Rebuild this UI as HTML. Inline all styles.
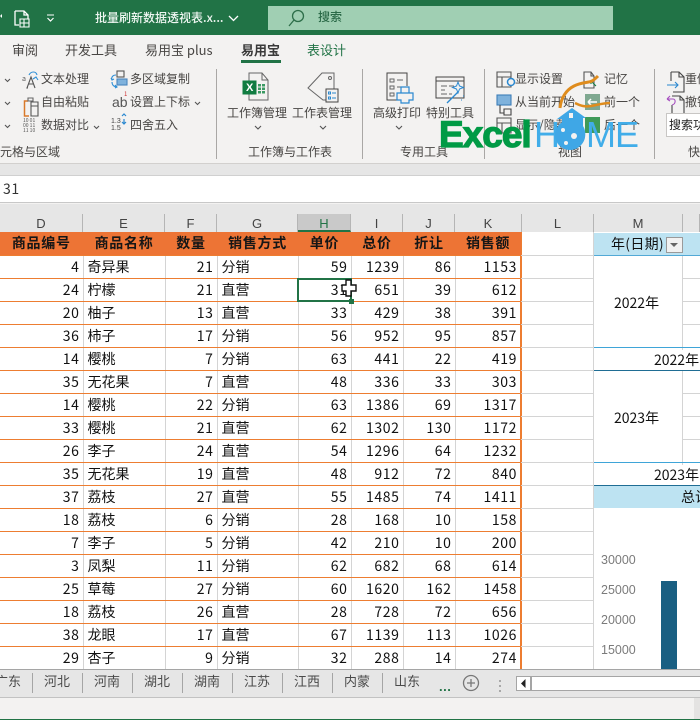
<!DOCTYPE html>
<html lang="zh"><head><meta charset="utf-8"><title>批量刷新数据透视表</title>
<style>
*{box-sizing:border-box;margin:0;padding:0}
html,body{width:700px;height:720px;overflow:hidden;background:#f3f2f1}
body{position:relative;font-family:"Liberation Sans","Noto Sans CJK SC",sans-serif;color:#444}
.a{position:absolute}
.t{position:absolute;white-space:nowrap;font-size:12px;line-height:16px;color:#484644;font-family:"Noto Sans CJK SC",sans-serif}
.sep{position:absolute;top:69px;height:90px;width:1px;background:#a9a7a5}
svg{position:absolute;overflow:visible}
.col{position:absolute;top:214px;height:18px;background:#e6e6e6;border-right:1px solid #b5b5b5;text-align:center;font-size:13px;line-height:20px;color:#444;font-family:"Liberation Sans",sans-serif}
table{position:absolute;left:0;top:232px;width:521px;border-collapse:collapse;table-layout:fixed;font-family:"Noto Sans CJK SC",sans-serif;font-size:14px;color:#111;background:#fff}
td{height:23px;padding:0 3px;border-right:1px solid #d4d4d4;border-bottom:1px solid #ed7d31;text-align:right;line-height:20px;white-space:nowrap;letter-spacing:.6px;overflow:hidden}
td.l{text-align:left;padding-left:4px;letter-spacing:0}
tr.h td{background:#ed7435;font-weight:700;text-align:center;color:#161616;border-right:1px solid #ed7435;letter-spacing:.7px;font-size:14px}
td.e{border-right:2px solid #ed7d31}
.gl{position:absolute;left:521px;width:72px;height:1px;background:#d4d4d4}
.gr{position:absolute;left:683px;width:17px;height:1px;background:#d4d4d4}
.p{position:absolute;font-family:"Noto Sans CJK SC",sans-serif;font-size:14px;color:#111;white-space:nowrap;line-height:20px}
.y{position:absolute;left:601px;font-size:12.5px;color:#7b7b7b;font-family:"Liberation Sans",sans-serif;line-height:14px}
.tab{position:absolute;top:673px;font-size:13px;line-height:16px;color:#4a4a4a;font-family:"Noto Sans CJK SC",sans-serif}
.ts{position:absolute;top:673px;width:1px;height:20px;background:#a5a5a5}
</style></head><body>

<!-- title bar -->
<div class="a" style="left:0;top:0;width:700px;height:35px;background:#217346"></div>
<div class="a" style="left:268px;top:6px;width:345px;height:24px;background:#a0cfb3"></div>
<svg style="left:0;top:0" width="240" height="35" fill="none" stroke="#fff" stroke-width="1.3">
<path d="M0 16l2 2 0-4z" fill="#fff" stroke="none"/>
<path d="M15 11h9l4 4v4M24 11v4h4M15 11v14h4"/>
<path d="M20 19h9v8h-9zM24 19v8M20 23h9" stroke-width="1.1"/>
<path d="M47 15h7" stroke-width="1"/><path d="M47.5 18l3 3 3-3" stroke-width="1.2"/>
<path d="M229 16l4.500 4.500 4.500-4.500" stroke-width="1.300"/>
</svg>
<div class="t" style="left:95px;top:10px;color:#eef6f1;font-size:12px;font-weight:500">批量刷新数据透视表.x...</div>
<svg style="left:285px;top:8px" width="24" height="20" fill="none" stroke="#2d6e49" stroke-width="1.300"><circle cx="13" cy="8" r="5.500"/><path d="M9 12l-5 6"/></svg>
<div class="t" style="left:318px;top:9px;color:#2b6a48;font-size:12px;font-weight:500">搜索</div>

<!-- tabs -->
<div class="t" style="left:12px;top:42px;font-size:13px">审阅</div>
<div class="t" style="left:65px;top:42px;font-size:13px">开发工具</div>
<div class="t" style="left:145px;top:42px;font-size:13px">易用宝 plus</div>
<div class="t" style="left:241px;top:42px;font-size:13px;font-weight:700;color:#3a3a3a">易用宝</div>
<div class="a" style="left:241px;top:60px;width:40px;height:3px;background:#217346"></div>
<div class="t" style="left:307px;top:42px;font-size:13px;color:#217346">表设计</div>

<!-- ribbon left block -->
<svg style="left:0;top:70px" width="220" height="70" fill="none" stroke="#555" stroke-width="1.100">
<path d="M5 9l2.500 2.500L10 9M5 32l2.500 2.500L10 32M5 55l2.500 2.500L10 55M94 56l2.500 2.500L99 56M195 32l2.500 2.500L200 32"/>
<path d="M28 18l-1 0 4-11 4 11M28.500 14h5"/>
<path d="M29 5c2-4 7-4 8 0" stroke="#2e8fd6"/><path d="M33 9l3-2 2 3" stroke="#2e8fd6"/>
<path d="M28 31h-3.500v15H29" stroke="#d9792a" stroke-width="1.500"/><path d="M28 28h5v3h-5z" stroke="#666"/><path d="M31 32h7v14h-7zM31 36h7"/>
<rect x="117" y="1" width="7" height="6"/><rect x="117" y="9" width="10" height="6" fill="#7fb2dc" stroke="#4a86bd"/>
<path d="M116 5c-3 0-5 2-4 5M111 8l1 2 2-1M112 12c0 3 2 5 5 5M115 15l2 2-2 1" stroke="#2e8fd6"/>
<path d="M124 49v5M122 46l2-2 2 2M122 52l2 2 2-2" stroke="#2a88d0" stroke-width="1.200"/>
</svg>
<div class="t" style="left:22px;top:71px;font-size:7px;color:#555">a</div>
<div class="t" style="left:23px;top:118px;font-size:5px;line-height:5px;color:#555;white-space:nowrap">10 01<br>00 11<br>11 10</div>
<div class="t" style="left:112px;top:94px;font-size:14px;color:#555;font-family:'Liberation Sans'">ab</div>
<div class="t" style="left:124px;top:90px;font-size:6px;line-height:8px;color:#c33">1</div>
<div class="t" style="left:111px;top:118px;font-size:7px;line-height:7px;color:#444;font-family:'Liberation Sans';white-space:normal;width:12px">1.3<br>1.5</div>

<div class="t" style="left:41px;top:71px">文本处理</div>
<div class="t" style="left:41px;top:94px">自由粘贴</div>
<div class="t" style="left:41px;top:117px">数据对比</div>
<div class="t" style="left:130px;top:71px">多区域复制</div>
<div class="t" style="left:130px;top:94px">设置上下标</div>
<div class="t" style="left:130px;top:117px">四舍五入</div>
<div class="t" style="left:0;top:144px">元格与区域</div>
<div class="sep" style="left:216px"></div>

<!-- workbook -->
<svg style="left:240px;top:72px" width="110" height="60" fill="none" stroke="#666" stroke-width="1">
<path d="M9 9V1h13l6 7v20H9v-7M22 1v7h6"/>
<path d="M3 9h13v13H3z" fill="#107c41" stroke="#107c41"/>
<path d="M18 12h3v2.500h-3zM22 12h3v2.500h-3zM18 15.500h3V18h-3zM22 15.500h3V18h-3zM18 19h3v2.500h-3zM22 19h3v2.500h-3z" fill="#3b9a63" stroke="none"/>
<path d="M86 17h-0M94 17V1H82L68 16l15 12h3"/>
<circle cx="90" cy="6" r="1.500"/>
<rect x="86" y="17" width="12" height="13" stroke="#444" fill="#f3f2f1"/>
<path d="M88.500 20h2v2h-2zM88.500 25h2v2h-2z" stroke="#2a88d0"/><path d="M92 21h4M92 26h4" stroke="#2a88d0"/>
</svg>
<div class="t" style="left:246px;top:80px;font-size:11px;font-weight:700;color:#fff;font-family:'Liberation Sans'">X</div>
<div class="t" style="left:227px;top:105px">工作簿管理</div>
<div class="t" style="left:292px;top:105px">工作表管理</div>
<svg style="left:254px;top:125px" width="75" height="8" fill="none" stroke="#555" stroke-width="1.100"><path d="M1 1l3 3 3-3M66 1l3 3 3-3"/></svg>
<div class="t" style="left:248px;top:144px">工作簿与工作表</div>
<div class="sep" style="left:362px"></div>

<!-- print -->
<svg style="left:385px;top:72px" width="90" height="40" fill="none" stroke="#444" stroke-width="1">
<path d="M22 14V1H2v27h10"/>
<path d="M5 7h4v3H5zM5 14h4v3H5zM5 21h4v3H5zM12 8h6M12 15h4" stroke="#666"/>
<path d="M16 15h8v6h-8z M12 21h16v7h-4v3h-8v-3h-4z" stroke="#2a88d0" stroke-width="1.200" fill="#f3f2f1"/>
<path d="M51 5h28v21H51zM51 9h28" stroke="#444"/>
<path d="M56 14h6M56 18h4M56 22h6M64 14h5M64 22h3" stroke="#666"/>
<path d="M62 31l11-11" stroke="#2a88d0" stroke-width="1.300"/>
<path d="M73 10l1.500 4 4 1.500-4 1.500-1.500 4-1.500-4-4-1.500 4-1.500z" stroke="#2a88d0" fill="#f3f2f1"/>
<path d="M78 24h1M76 28h1" stroke="#2a88d0"/>
</svg>
<div class="t" style="left:373px;top:105px">高级打印</div>
<div class="t" style="left:426px;top:105px">特别工具</div>
<svg style="left:395px;top:125px" width="10" height="8" fill="none" stroke="#555" stroke-width="1.100"><path d="M1 1l3 3 3-3"/></svg>
<div class="t" style="left:400px;top:144px">专用工具</div>
<div class="sep" style="left:484px"></div>

<!-- view -->
<svg style="left:495px;top:70px" width="140" height="70" fill="none" stroke="#555" stroke-width="1.100">
<path d="M2 2h14v15H2zM2 7h14M7 7v10"/>
<circle cx="16" cy="12" r="3.500" stroke="#2a88d0" stroke-width="1.500" fill="#f3f2f1"/>
<rect x="2" y="25" width="14" height="10" fill="#7fb2dc" stroke="#3e7fb8"/>
<path d="M5 35v8h4" stroke="#444"/><path d="M9 39h7v6H9z" stroke="#444"/>
<path d="M2 48h14v15H2zM2 53h14M7 53v10"/>
<path d="M89 2h7l3 4v12H89zM96 2v4h3"/><path d="M96 11l5 5M96 11h3M96 11v3" stroke="#107c41"/>
<rect x="90" y="24" width="15" height="16" fill="#7fa890" stroke="none"/>
<path d="M93 32h9M93 32l3-3M93 32l3 3" stroke="#fff" stroke-width="1.500"/>
<rect x="90" y="47" width="15" height="16" fill="#3f9a58" stroke="none"/>
</svg>
<div class="t" style="left:515px;top:71px">显示设置</div>
<div class="t" style="left:515px;top:94px">从当前开始</div>
<div class="t" style="left:515px;top:117px">显示/隐藏</div>
<div class="t" style="left:604px;top:71px">记忆</div>
<div class="t" style="left:604px;top:94px">前一个</div>
<div class="t" style="left:604px;top:117px">后一个</div>
<div class="t" style="left:558px;top:144px">视图</div>
<div class="sep" style="left:654px"></div>

<!-- right -->
<svg style="left:665px;top:70px" width="35" height="45" fill="none" stroke="#444" stroke-width="1.100">
<path d="M6 2h8l5 5v15H8M14 2v5h5M6 2v9"/><path d="M2 15h11M10 12l3 3-3 3" stroke="#2a88d0"/>
<path d="M7 26h8l4 4v14H7v-9M15 26v4h4"/><path d="M2 29l3-3M2 29l3 2M2 29h6c3 0 3 5-1 6" stroke="#a64fc0"/>
</svg>
<div class="t" style="left:685px;top:71px">重做</div>
<div class="t" style="left:685px;top:94px">撤销</div>
<div class="a" style="left:666px;top:113px;width:34px;height:24px;background:#fff;border:1px solid #c8c6c4;border-right:0"></div>
<div class="t" style="left:669px;top:117px;color:#222;font-size:12px;overflow:hidden;width:31px">搜索功能</div>
<div class="t" style="left:688px;top:144px">快</div>

<!-- logo overlay -->
<div class="a" style="left:439px;top:113px;font-family:'Liberation Sans';font-weight:700;font-size:37px;line-height:44px;color:#009a45;letter-spacing:-1px;-webkit-text-stroke:1.200px #009a45;white-space:nowrap">Excel</div>
<div class="a" style="left:534px;top:113px;font-family:'Liberation Sans';font-size:36px;line-height:44px;color:#41ade9;letter-spacing:-1px;white-space:nowrap">HOME</div>
<svg style="left:530px;top:70px" width="110" height="90" fill="none">
<path d="M42 38l14 10h-3v8l-2 3" fill="#3fa7e6"/>
<path d="M42 38L27 49h5v5h20V48z" fill="#3fa7e6"/>
<circle cx="40" cy="65" r="15" fill="#3fa7e6"/>
<path d="M39 43h4v5h-4z" fill="#f3f2f1"/>
<circle cx="33" cy="60" r="2" fill="#f3f2f1"/><circle cx="44" cy="66" r="3" fill="#f3f2f1"/><circle cx="36" cy="73" r="2" fill="#f3f2f1"/>
<path d="M30 38c1-10 6-18 14-22 8-4 14-3 18-5 2-1 4-3 6-5" stroke="#df8c1d" stroke-width="3"/>
<path d="M45 33c6 3 10 4 16 3 6-1 12-3 19-3" stroke="#df8c1d" stroke-width="2.500"/>
</svg>

<div class="a" style="left:0;top:163px;width:700px;height:1px;background:#d2d0ce"></div>
<div class="a" style="left:0;top:164px;width:700px;height:11px;background:#e6e6e6"></div>
<div class="a" style="left:0;top:175px;width:700px;height:28px;background:#fff;border-top:1px solid #d0d0d0;border-bottom:1px solid #c8c8c8"></div>
<div class="a" style="left:3px;top:179px;font-size:14px;line-height:20px;color:#333;font-family:'Noto Sans CJK SC';letter-spacing:.6px">31</div>
<div class="a" style="left:0;top:204px;width:700px;height:10px;background:#e6e6e6"></div>

<!-- col headers -->
<div class="col" style="left:0;width:83px">D</div>
<div class="col" style="left:83px;width:82px">E</div>
<div class="col" style="left:165px;width:52px">F</div>
<div class="col" style="left:217px;width:81px">G</div>
<div class="col" style="left:298px;width:53px;background:#c9c9c9;border-bottom:2px solid #217346;color:#217346;line-height:19px">H</div>
<div class="col" style="left:351px;width:52px">I</div>
<div class="col" style="left:403px;width:52px">J</div>
<div class="col" style="left:455px;width:67px">K</div>
<div class="col" style="left:522px;width:72px">L</div>
<div class="col" style="left:594px;width:89px">M</div>
<div class="col" style="left:683px;width:17px"></div>
<div class="a" style="left:0;top:232px;width:700px;height:438px;background:#fff"></div>

<table>
<colgroup><col style="width:83px"><col style="width:82px"><col style="width:52px"><col style="width:81px"><col style="width:53px"><col style="width:52px"><col style="width:52px"><col style="width:66px"></colgroup>
<tr class="h"><td>商品编号</td><td>商品名称</td><td>数量</td><td>销售方式</td><td>单价</td><td>总价</td><td>折让</td><td class="e" style="border-right-color:#ed7d31">销售额</td></tr>
<tr><td>4</td><td class="l">奇异果</td><td>21</td><td class="l">分销</td><td>59</td><td>1239</td><td>86</td><td class="e">1153</td></tr>
<tr><td>24</td><td class="l">柠檬</td><td>21</td><td class="l">直营</td><td>31</td><td>651</td><td>39</td><td class="e">612</td></tr>
<tr><td>20</td><td class="l">柚子</td><td>13</td><td class="l">直营</td><td>33</td><td>429</td><td>38</td><td class="e">391</td></tr>
<tr><td>36</td><td class="l">柿子</td><td>17</td><td class="l">分销</td><td>56</td><td>952</td><td>95</td><td class="e">857</td></tr>
<tr><td>14</td><td class="l">樱桃</td><td>7</td><td class="l">分销</td><td>63</td><td>441</td><td>22</td><td class="e">419</td></tr>
<tr><td>35</td><td class="l">无花果</td><td>7</td><td class="l">直营</td><td>48</td><td>336</td><td>33</td><td class="e">303</td></tr>
<tr><td>14</td><td class="l">樱桃</td><td>22</td><td class="l">分销</td><td>63</td><td>1386</td><td>69</td><td class="e">1317</td></tr>
<tr><td>33</td><td class="l">樱桃</td><td>21</td><td class="l">直营</td><td>62</td><td>1302</td><td>130</td><td class="e">1172</td></tr>
<tr><td>26</td><td class="l">李子</td><td>24</td><td class="l">直营</td><td>54</td><td>1296</td><td>64</td><td class="e">1232</td></tr>
<tr><td>35</td><td class="l">无花果</td><td>19</td><td class="l">直营</td><td>48</td><td>912</td><td>72</td><td class="e">840</td></tr>
<tr><td>37</td><td class="l">荔枝</td><td>27</td><td class="l">直营</td><td>55</td><td>1485</td><td>74</td><td class="e">1411</td></tr>
<tr><td>18</td><td class="l">荔枝</td><td>6</td><td class="l">分销</td><td>28</td><td>168</td><td>10</td><td class="e">158</td></tr>
<tr><td>7</td><td class="l">李子</td><td>5</td><td class="l">分销</td><td>42</td><td>210</td><td>10</td><td class="e">200</td></tr>
<tr><td>3</td><td class="l">凤梨</td><td>11</td><td class="l">分销</td><td>62</td><td>682</td><td>68</td><td class="e">614</td></tr>
<tr><td>25</td><td class="l">草莓</td><td>27</td><td class="l">分销</td><td>60</td><td>1620</td><td>162</td><td class="e">1458</td></tr>
<tr><td>18</td><td class="l">荔枝</td><td>26</td><td class="l">直营</td><td>28</td><td>728</td><td>72</td><td class="e">656</td></tr>
<tr><td>38</td><td class="l">龙眼</td><td>17</td><td class="l">直营</td><td>67</td><td>1139</td><td>113</td><td class="e">1026</td></tr>
<tr style="border-bottom:0"><td>29</td><td class="l">杏子</td><td>9</td><td class="l">分销</td><td>32</td><td>288</td><td>14</td><td class="e">274</td></tr>
</table>

<!-- selection -->
<div class="a" style="left:297px;top:278px;width:55px;height:24px;border:2px solid #217346"></div>
<div class="a" style="left:349px;top:299px;width:5px;height:5px;background:#217346;border:0"></div>
<svg style="left:341px;top:279px" width="18" height="20"><path d="M5 1h5v5h5v6h-5v5H5v-5H1V6h4z" fill="#fff" stroke="#111" stroke-width="1.400"/></svg>

<!-- L grid -->
<div class="gl" style="top:255px"></div><div class="gl" style="top:278px"></div><div class="gl" style="top:301px"></div><div class="gl" style="top:324px"></div><div class="gl" style="top:347px"></div><div class="gl" style="top:370px"></div><div class="gl" style="top:393px"></div><div class="gl" style="top:416px"></div><div class="gl" style="top:439px"></div><div class="gl" style="top:462px"></div><div class="gl" style="top:485px"></div><div class="gl" style="top:508px"></div><div class="gl" style="top:531px"></div><div class="gl" style="top:554px"></div><div class="gl" style="top:577px"></div><div class="gl" style="top:600px"></div><div class="gl" style="top:623px"></div><div class="gl" style="top:646px"></div>
<div class="a" style="left:593px;top:232px;width:1px;height:438px;background:#d4d4d4"></div>

<!-- pivot -->
<div class="a" style="left:594px;top:233px;width:106px;height:22px;background:#bde3f2"></div>
<div class="a" style="left:594px;top:255px;width:106px;height:1px;background:#52a9d6"></div>
<div class="p" style="left:611px;top:234px;letter-spacing:.3px">年(日期)</div>
<div class="a" style="left:666px;top:237px;width:17px;height:16px;background:#f1f1f1;border:1px solid #9a9a9a"></div>
<svg style="left:670px;top:243px" width="10" height="6"><path d="M0 0h8l-4 4z" fill="#666"/></svg>
<div class="a" style="left:682px;top:256px;width:1px;height:229px;background:#d4d4d4"></div>
<div class="gr" style="top:278px"></div><div class="gr" style="top:301px"></div><div class="gr" style="top:324px"></div>
<div class="gr" style="top:393px"></div><div class="gr" style="top:416px"></div><div class="gr" style="top:439px"></div>
<div class="a" style="left:594px;top:347px;width:106px;height:1px;background:#3fa5d8"></div>
<div class="a" style="left:594px;top:370px;width:106px;height:1px;background:#1f6d94"></div>
<div class="a" style="left:594px;top:462px;width:106px;height:1px;background:#3fa5d8"></div>
<div class="a" style="left:594px;top:485px;width:106px;height:1px;background:#1f6d94"></div>
<div class="p" style="left:614px;top:293px">2022年</div>
<div class="p" style="left:654px;top:350px;background:#fff">2022年</div>
<div class="p" style="left:614px;top:408px">2023年</div>
<div class="p" style="left:654px;top:465px;background:#fff">2023年</div>
<div class="a" style="left:594px;top:486px;width:106px;height:22px;background:#bde3f2"></div>
<div class="p" style="left:681px;top:487px">总计</div>

<!-- chart -->
<div class="y" style="top:553px">30000</div>
<div class="y" style="top:583px">25000</div>
<div class="y" style="top:613px">20000</div>
<div class="y" style="top:643px">15000</div>
<div class="a" style="left:661px;top:581px;width:16px;height:88px;background:#1a5f82"></div>

<!-- sheet tabs -->
<div class="a" style="left:0;top:669px;width:700px;height:29px;background:#e6e6e6;border-top:1px solid #a5a5a5;border-bottom:1px solid #c2c2c2"></div>
<div class="tab" style="left:-5px">广东</div><div class="ts" style="left:32px"></div>
<div class="tab" style="left:44px">河北</div><div class="ts" style="left:82px"></div>
<div class="tab" style="left:94px">河南</div><div class="ts" style="left:132px"></div>
<div class="tab" style="left:144px">湖北</div><div class="ts" style="left:182px"></div>
<div class="tab" style="left:194px">湖南</div><div class="ts" style="left:232px"></div>
<div class="tab" style="left:244px">江苏</div><div class="ts" style="left:282px"></div>
<div class="tab" style="left:294px">江西</div><div class="ts" style="left:332px"></div>
<div class="tab" style="left:344px">内蒙</div><div class="ts" style="left:382px"></div>
<div class="tab" style="left:394px">山东</div>
<div class="a" style="left:439px;top:680px;font-size:13px;line-height:14px;font-weight:700;color:#217346;letter-spacing:.5px">...</div>
<svg style="left:462px;top:674px" width="18" height="18" fill="none" stroke="#777" stroke-width="1.300"><circle cx="9" cy="9" r="7.500"/><path d="M5 9h8M9 5v8"/></svg>
<svg style="left:498px;top:680px" width="4" height="12"><path d="M1 0h2v2H1zM1 5h2v2H1zM1 10h2v2H1z" fill="#a8a8a8"/></svg>
<div class="a" style="left:516px;top:676px;width:184px;height:15px;background:#fff;border:1px solid #a5a5a5;border-right:0"></div>
<div class="a" style="left:530px;top:676px;width:2px;height:15px;background:#a5a5a5"></div>
<svg style="left:520px;top:679px" width="8" height="10"><path d="M5.500 0v9L1 4.500z" fill="#222"/></svg>

<!-- status -->
<div class="a" style="left:0;top:698px;width:700px;height:21px;background:#f3f2f1"></div>
<div class="a" style="left:694px;top:698px;width:6px;height:21px;background:#e4e3e2"></div>
<div class="a" style="left:0;top:719px;width:700px;height:1px;background:#217346"></div>
</body></html>
